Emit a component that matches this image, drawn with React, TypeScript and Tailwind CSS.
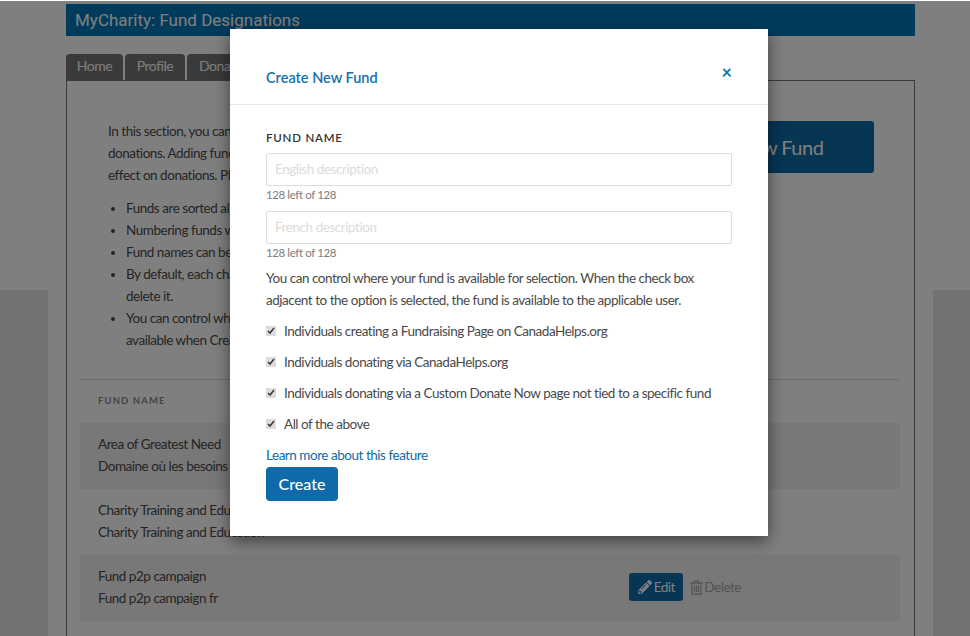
import { Fragment } from "react";
import { FaPencilAlt } from "react-icons/fa";

const rows = [
  ["Area of Greatest Need", "Domaine où les besoins sont les plus grands"],
  ["Charity Training and Education", "Charity Training and Education"],
  ["Fund p2p campaign", "Fund p2p campaign fr"],
];

const checks = [
  "Individuals creating a Fundraising Page on CanadaHelps.org",
  "Individuals donating via CanadaHelps.org",
  "Individuals donating via a Custom Donate Now page not tied to a specific fund",
  "All of the above",
];

const intro = [
  "In this section, you can create and manage your funds for",
  "donations. Adding funds allows you to direct gifts and has no",
  "effect on donations. Please note the following:",
];

const bullets = [
  ["Funds are sorted alphabetically by fund name."],
  ["Numbering funds will change the way they are sorted."],
  ["Fund names can be edited at any time."],
  ["By default, each charity has one fund. You can add a fund or", "delete it."],
  ["You can control where each fund is shown and whether it is", "available when Creating a Fundraising Page."],
];

function Lines({ lines }: { lines: string[] }) {
  return (
    <>
      {lines.map((l, i) => (
        <Fragment key={l}>
          {i > 0 && <br />}
          {l}
        </Fragment>
      ))}
    </>
  );
}

function TrashIcon() {
  return (
    <svg width="13" height="15" viewBox="0 0 13 15" fill="none" stroke="currentColor" strokeWidth="1.2">
      <path d="M4.5 3V1.2h4V3M.3 3.2h12.4M2 3.2V14.2h9V3.2M4.5 5.5v6.5M6.5 5.5v6.5M8.5 5.5v6.5" />
    </svg>
  );
}

function FundInput({ placeholder }: { placeholder: string }) {
  return (
    <div>
      <input
        placeholder={placeholder}
        className="block h-[33px] w-full rounded-[2px] border border-[#dddddd] bg-white px-[8px] pb-[2px] text-[13.5px] tracking-[-0.45px] outline-none placeholder:text-[#dcdcdc]"
      />
      <div className="mt-[2px] text-[11.5px] leading-[14px] tracking-[-0.4px] text-[#7d7d7d]">128 left of 128</div>
    </div>
  );
}

export default function App() {
  return (
    <div className="relative flex h-[636px] w-[970px] overflow-hidden bg-white font-['Lato','Liberation_Sans',sans-serif] text-[13.5px] leading-[22px] tracking-[-0.47px] text-[#4a4a4a]">
      <div className="flex w-[48px] flex-col">
        <div className="h-[290px]" />
        <div className="flex-1 bg-[#e6e6e6]" />
      </div>

      <main className="w-[885px] pl-[18px]">
        <div className="mt-[4px] flex h-[32px] w-[849px] items-center bg-[#0276b8] pl-[9px] font-['Roboto',sans-serif] text-[17px] font-normal tracking-normal text-white">
          MyCharity: Fund Designations
        </div>

        <nav className="mt-[18px] flex h-[26px] gap-[2px] text-[14px] leading-[24px] text-white">
          <div className="w-[57px] rounded-t-[4px] bg-[#747474] text-center">Home</div>
          <div className="w-[60px] rounded-t-[4px] bg-[#747474] text-center">Profile</div>
          <div className="w-[80px] rounded-t-[4px] bg-[#747474] pl-[12px]">Donations</div>
        </nav>

        <section className="h-[600px] w-[849px] border border-[#777] pr-[14px] pl-[13px]">
          <div className="flex pt-[39px] pl-[28px]">
            <div className="w-[490px]">
              <p>
                <Lines lines={intro} />
              </p>
              <ul className="mt-[11px] list-disc pl-[18px]">
                {bullets.map((b) => (
                  <li key={b[0]}>
                    <Lines lines={b} />
                  </li>
                ))}
              </ul>
            </div>
            <div className="mt-px mr-[26px] ml-auto flex h-[52px] w-[247px] items-center justify-center rounded-[3px] bg-[#0e6aa8] text-[20px] tracking-[-0.5px] text-white">
              Create New Fund
            </div>
          </div>

          <div className="mt-[28px] border-t border-[#dcdcdc] pt-[15px] pr-[18px] pb-[16px] pl-[18px] text-[9.5px] leading-[12px] font-bold tracking-[1.1px] text-[#8a8a8a]">
            FUND NAME
          </div>
          {rows.map(([en, fr], i) => (
            <div
              key={en}
              className={`flex h-[66px] items-center justify-between pr-[159px] pl-[18px] ${i % 2 === 0 ? "bg-[#f0f0f0]" : "bg-white"}`}
            >
              <div className="pb-[2px]">
                <div>{en}</div>
                <div>{fr}</div>
              </div>
              <div className="flex items-center gap-[7px] pb-[2px]">
                <span className="flex h-[28px] w-[54px] items-center justify-center gap-[2px] rounded-[3px] bg-[#0e6aa8] text-[13.5px] text-white">
                  <FaPencilAlt className="size-[14px]" />
                  Edit
                </span>
                <span className="flex items-center gap-[1px] text-[13.5px] text-[#a4a4a4]">
                  <TrashIcon />
                  Delete
                </span>
              </div>
            </div>
          ))}
        </section>
      </main>

      <div className="flex flex-1 flex-col">
        <div className="h-[290px]" />
        <div className="flex-1 bg-[#e6e6e6]" />
      </div>

      <div className="absolute inset-x-0 top-px bottom-0 bg-black/50" />

      <div className="absolute top-[29px] left-[230px] h-[507px] w-[538px] bg-white shadow-[0_5px_15px_rgba(0,0,0,0.5)]">
        <header className="flex h-[76px] items-start justify-between border-b border-[#e5e5e5] px-[36px]">
          <h2 className="mt-[38px] text-[14.5px] leading-[22px] font-semibold tracking-normal text-[#1570ad]">Create New Fund</h2>
          <span className="mt-[32px] text-[18px] leading-[22px] font-bold tracking-normal text-[#1570ad]">×</span>
        </header>
        <div className="px-[36px] pt-[25px]">
          <label className="mb-[7px] block text-[11.5px] leading-[16px] font-semibold tracking-[0.8px] text-[#333]">FUND NAME</label>
          <FundInput placeholder="English description" />
          <div className="h-[9px]" />
          <FundInput placeholder="French description" />
          <p className="mt-[7px]">You can control where your fund is available for selection. When the check box adjacent to the option is selected, the fund is available to the applicable user.</p>
          <div className="mt-[9px] flex flex-col gap-[9px]">
            {checks.map((c) => (
              <label key={c} className="flex items-center gap-[8px]">
                <input type="checkbox" defaultChecked className="size-[10px] accent-[#dddddd]" />
                {c}
              </label>
            ))}
          </div>
          <a className="mt-[9px] block text-[#0e6aa8]">Learn more about this feature</a>
          <button className="mt-px h-[34px] w-[72px] rounded-[4px] bg-[#0e6aa8] text-[16px] font-medium tracking-normal text-white">Create</button>
        </div>
      </div>
    </div>
  );
}
